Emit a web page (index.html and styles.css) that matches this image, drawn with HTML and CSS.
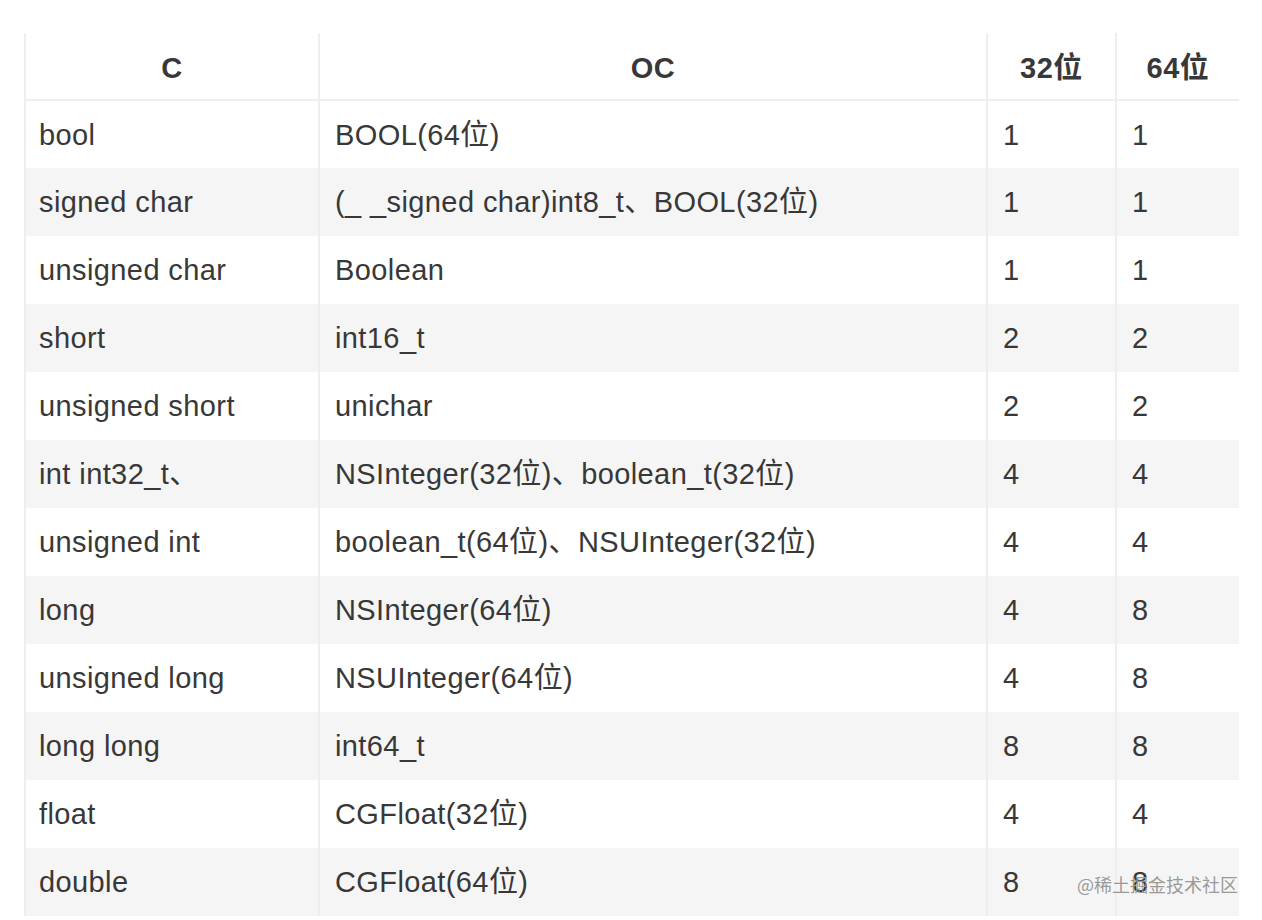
FILE: index.html
```html
<!DOCTYPE html>
<html>
<head>
<meta charset="utf-8">
<link rel="stylesheet" href="styles.css">
</head>
<body>
<div class="wrap">
<table class="types">
<colgroup><col class="c1"><col class="c2"><col class="c3"><col class="c4"></colgroup>
<thead>
<tr><th>C</th><th>OC</th><th>32位</th><th>64位</th></tr>
</thead>
<tbody>
<tr><td>bool</td><td>BOOL(64位)</td><td>1</td><td>1</td></tr>
<tr><td>signed char</td><td>(_ _signed char)int8_t、BOOL(32位)</td><td>1</td><td>1</td></tr>
<tr><td>unsigned char</td><td>Boolean</td><td>1</td><td>1</td></tr>
<tr><td>short</td><td>int16_t</td><td>2</td><td>2</td></tr>
<tr><td>unsigned short</td><td>unichar</td><td>2</td><td>2</td></tr>
<tr><td>int int32_t、</td><td>NSInteger(32位)、boolean_t(32位)</td><td>4</td><td>4</td></tr>
<tr><td>unsigned int</td><td>boolean_t(64位)、NSUInteger(32位)</td><td>4</td><td>4</td></tr>
<tr><td>long</td><td>NSInteger(64位)</td><td>4</td><td>8</td></tr>
<tr><td>unsigned long</td><td>NSUInteger(64位)</td><td>4</td><td>8</td></tr>
<tr><td>long long</td><td>int64_t</td><td>8</td><td>8</td></tr>
<tr><td>float</td><td>CGFloat(32位)</td><td>4</td><td>4</td></tr>
<tr><td>double</td><td>CGFloat(64位)</td><td>8</td><td>8</td></tr>
</tbody>
</table>
<span class="mark">@稀土掘金技术社区</span>
</div>
</body>
</html>
```
FILE: styles.css
```css
html, body {
  margin: 0;
  padding: 0;
  background: #fff;
}
body {
  font-family: "Liberation Sans", "Noto Sans CJK SC", sans-serif;
  color: #383838;
}
.wrap {
  position: relative;
  width: 1214px;
  margin: 33px 0 0 24px;
}
.types {
  width: 1214px;
  table-layout: fixed;
  border-collapse: collapse;
  border-spacing: 0;
  font-size: 29px;
  letter-spacing: 0.4px;
}
.c1 { width: 294px; }
.c2 { width: 668px; }
.c3 { width: 129px; }
.c4 { width: 123px; }
.types th,
.types td {
  height: 68px;
  box-sizing: border-box;
  padding: 0 0 0 13px;
  border-left: 2px solid #eee;
  white-space: nowrap;
  overflow: hidden;
  vertical-align: middle;
  line-height: 32px;
}
.types td + td { padding-left: 15px; }
.types th {
  height: 67px;
  font-weight: bold;
  text-align: center;
  padding: 0;
  border-bottom: 2px solid #eee;
  font-size: 29px;
  letter-spacing: 0.5px;
  padding-top: 3px;
}
.types tbody tr:nth-child(even) td {
  background: #f5f5f5;
}
.mark {
  position: absolute;
  right: 0;
  bottom: 22px;
  font-size: 18px;
  color: #9a9a9a;
  font-family: "Noto Sans CJK SC", sans-serif;
  line-height: 20px;
  letter-spacing: 0;
}
```
